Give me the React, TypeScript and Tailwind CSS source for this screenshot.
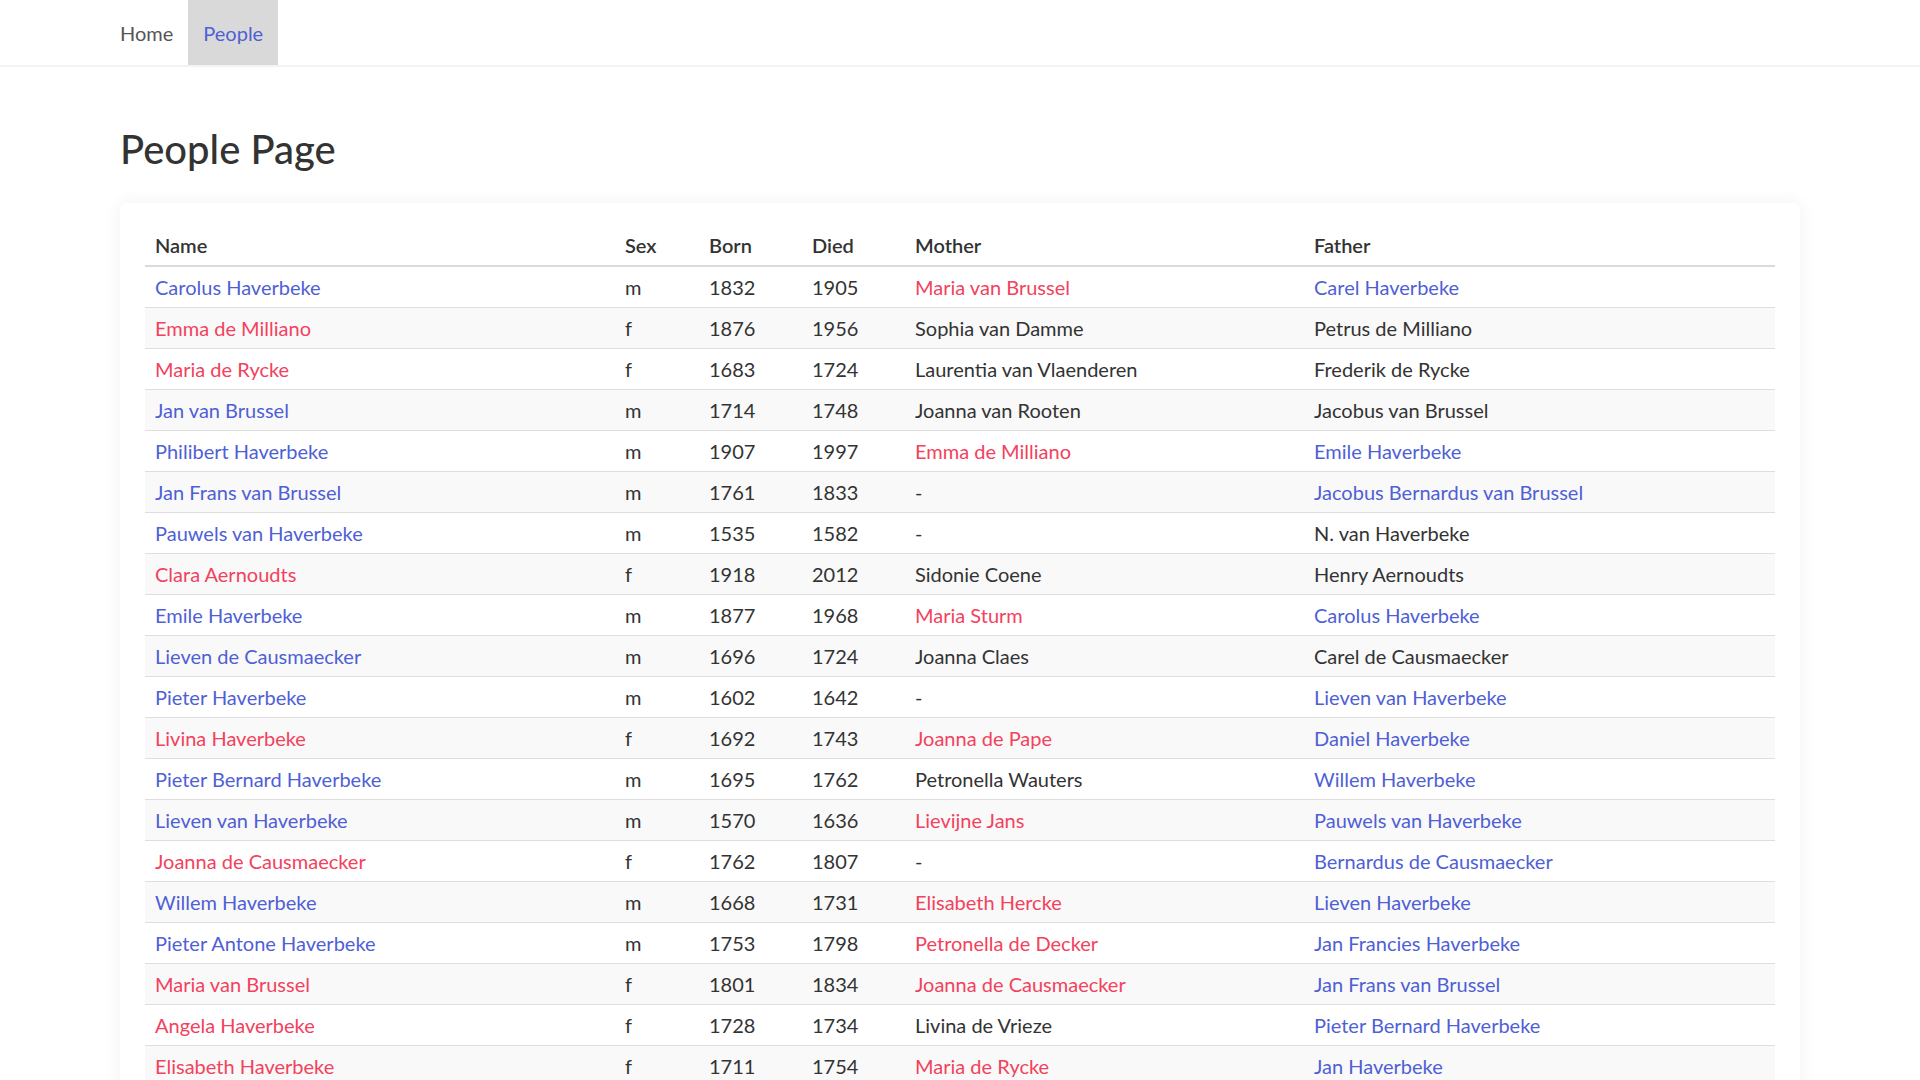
import React from 'react';

type Ref = { name: string; sex?: 'm' | 'f' } | null;

interface Person {
  name: string;
  sex: 'm' | 'f';
  born: number;
  died: number;
  mother: Ref | string;
  father: Ref | string;
}

const PEOPLE: Person[] = [
  { name: 'Carolus Haverbeke', sex: 'm', born: 1832, died: 1905, mother: { name: 'Maria van Brussel', sex: 'f' }, father: { name: 'Carel Haverbeke', sex: 'm' } },
  { name: 'Emma de Milliano', sex: 'f', born: 1876, died: 1956, mother: 'Sophia van Damme', father: 'Petrus de Milliano' },
  { name: 'Maria de Rycke', sex: 'f', born: 1683, died: 1724, mother: 'Laurentia van Vlaenderen', father: 'Frederik de Rycke' },
  { name: 'Jan van Brussel', sex: 'm', born: 1714, died: 1748, mother: 'Joanna van Rooten', father: 'Jacobus van Brussel' },
  { name: 'Philibert Haverbeke', sex: 'm', born: 1907, died: 1997, mother: { name: 'Emma de Milliano', sex: 'f' }, father: { name: 'Emile Haverbeke', sex: 'm' } },
  { name: 'Jan Frans van Brussel', sex: 'm', born: 1761, died: 1833, mother: null, father: { name: 'Jacobus Bernardus van Brussel', sex: 'm' } },
  { name: 'Pauwels van Haverbeke', sex: 'm', born: 1535, died: 1582, mother: null, father: 'N. van Haverbeke' },
  { name: 'Clara Aernoudts', sex: 'f', born: 1918, died: 2012, mother: 'Sidonie Coene', father: 'Henry Aernoudts' },
  { name: 'Emile Haverbeke', sex: 'm', born: 1877, died: 1968, mother: { name: 'Maria Sturm', sex: 'f' }, father: { name: 'Carolus Haverbeke', sex: 'm' } },
  { name: 'Lieven de Causmaecker', sex: 'm', born: 1696, died: 1724, mother: 'Joanna Claes', father: 'Carel de Causmaecker' },
  { name: 'Pieter Haverbeke', sex: 'm', born: 1602, died: 1642, mother: null, father: { name: 'Lieven van Haverbeke', sex: 'm' } },
  { name: 'Livina Haverbeke', sex: 'f', born: 1692, died: 1743, mother: { name: 'Joanna de Pape', sex: 'f' }, father: { name: 'Daniel Haverbeke', sex: 'm' } },
  { name: 'Pieter Bernard Haverbeke', sex: 'm', born: 1695, died: 1762, mother: 'Petronella Wauters', father: { name: 'Willem Haverbeke', sex: 'm' } },
  { name: 'Lieven van Haverbeke', sex: 'm', born: 1570, died: 1636, mother: { name: 'Lievijne Jans', sex: 'f' }, father: { name: 'Pauwels van Haverbeke', sex: 'm' } },
  { name: 'Joanna de Causmaecker', sex: 'f', born: 1762, died: 1807, mother: null, father: { name: 'Bernardus de Causmaecker', sex: 'm' } },
  { name: 'Willem Haverbeke', sex: 'm', born: 1668, died: 1731, mother: { name: 'Elisabeth Hercke', sex: 'f' }, father: { name: 'Lieven Haverbeke', sex: 'm' } },
  { name: 'Pieter Antone Haverbeke', sex: 'm', born: 1753, died: 1798, mother: { name: 'Petronella de Decker', sex: 'f' }, father: { name: 'Jan Francies Haverbeke', sex: 'm' } },
  { name: 'Maria van Brussel', sex: 'f', born: 1801, died: 1834, mother: { name: 'Joanna de Causmaecker', sex: 'f' }, father: { name: 'Jan Frans van Brussel', sex: 'm' } },
  { name: 'Angela Haverbeke', sex: 'f', born: 1728, died: 1734, mother: 'Livina de Vrieze', father: { name: 'Pieter Bernard Haverbeke', sex: 'm' } },
  { name: 'Elisabeth Haverbeke', sex: 'f', born: 1711, died: 1754, mother: { name: 'Maria de Rycke', sex: 'f' }, father: { name: 'Jan Haverbeke', sex: 'm' } },
];

function PersonLink({ name, sex }: { name: string; sex?: 'm' | 'f' }) {
  return (
    <a href="#" className={sex === 'f' ? 'text-[#f2425d]' : 'text-[#4f5fd6]'}>
      {name}
    </a>
  );
}

function Parent({ value }: { value: Ref | string }) {
  if (value === null) return <>-</>;
  if (typeof value === 'string') return <>{value}</>;
  return <PersonLink name={value.name} sex={value.sex} />;
}

export default function App() {
  return (
    <div className="min-h-screen bg-white text-[#333] font-['Lato','Liberation_Sans',sans-serif] text-[20px]">
      <nav className="h-[67px] border-b-2 border-[#f3f3f3]">
        <ul className="flex h-[65px] pl-[105px]">
          <li>
            <a href="#" className="flex h-full items-center px-[15px] text-[#555]">Home</a>
          </li>
          <li>
            <a href="#" className="flex h-full items-center px-[15px] bg-[#d9d9d9] text-[#4f5fd6]">People</a>
          </li>
        </ul>
      </nav>

      <main className="px-[120px]">
        <h1 className="mt-[56px] mb-[28px] text-[40px] leading-[52px] font-medium text-[#333]">People Page</h1>

        <div className="rounded-md bg-white px-[25px] pt-[22px] pb-[25px] shadow-[0_0_18px_rgba(0,0,0,0.06)]">
          <table className="w-full table-fixed border-collapse">
            <colgroup>
              <col className="w-[470px]" />
              <col className="w-[84px]" />
              <col className="w-[103px]" />
              <col className="w-[103px]" />
              <col className="w-[399px]" />
              <col />
            </colgroup>
            <thead>
              <tr className="h-[41px] border-b-2 border-[#dadada] text-left">
                <th className="px-[10px] font-semibold">Name</th>
                <th className="px-[10px] font-semibold">Sex</th>
                <th className="px-[10px] font-semibold">Born</th>
                <th className="px-[10px] font-semibold">Died</th>
                <th className="px-[10px] font-semibold">Mother</th>
                <th className="px-[10px] font-semibold">Father</th>
              </tr>
            </thead>
            <tbody>
              {PEOPLE.map((p, i) => (
                <tr key={p.name} className={`h-[41px] border-b border-[#dedede] ${i % 2 === 1 ? 'bg-[#f9f9f9]' : 'bg-white'}`}>
                  <td className="px-[10px]"><PersonLink name={p.name} sex={p.sex} /></td>
                  <td className="px-[10px]">{p.sex}</td>
                  <td className="px-[10px]">{p.born}</td>
                  <td className="px-[10px]">{p.died}</td>
                  <td className="px-[10px]"><Parent value={p.mother} /></td>
                  <td className="px-[10px]"><Parent value={p.father} /></td>
                </tr>
              ))}
            </tbody>
          </table>
        </div>
      </main>
    </div>
  );
}
